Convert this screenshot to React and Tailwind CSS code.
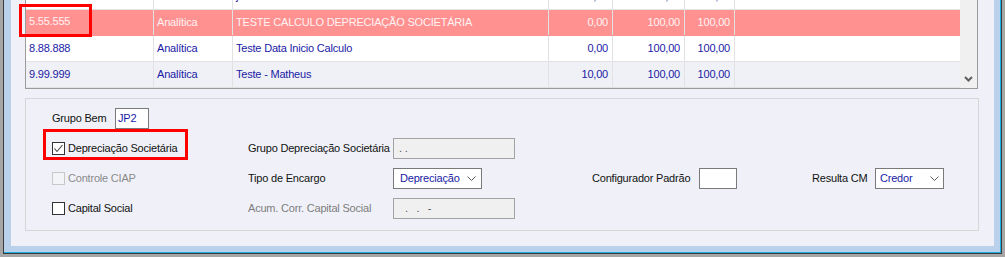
const ROWS = [
  { code: '4.00.404', tipo: 'Analítica', desc: 'jssdasdasdas', a: '10,00', b: '100,00', c: '100,00', bg: 'bg-white' },
  { code: '5.55.555', tipo: 'Analítica', desc: 'TESTE CALCULO DEPRECIAÇÃO SOCIETÁRIA', a: '0,00', b: '100,00', c: '100,00', selected: true },
  { code: '8.88.888', tipo: 'Analítica', desc: 'Teste Data Inicio Calculo', a: '0,00', b: '100,00', c: '100,00', bg: 'bg-white' },
  { code: '9.99.999', tipo: 'Analítica', desc: 'Teste - Matheus', a: '10,00', b: '100,00', c: '100,00', bg: 'bg-[#f0f1f6]' },
]

function Chevron() {
  return (
    <svg width="9" height="5" viewBox="0 0 9 5" className="shrink-0">
      <polyline points="0.5,0.5 4.5,4.5 8.5,0.5" fill="none" stroke="#5a5a5a" strokeWidth="1" />
    </svg>
  )
}

function Check({ checked, disabled }) {
  return (
    <span
      className={`w-[13px] h-[13px] shrink-0 flex items-center justify-center border ${
        disabled ? 'border-[#c8c8c8] bg-[#f3f4f8]' : 'border-[#333333] bg-white'
      }`}
    >
      {checked && (
        <svg width="11" height="11" viewBox="0 0 11 11">
          <polyline points="1.5,5.5 4,8.5 9.5,2" fill="none" stroke="#444" strokeWidth="1.1" />
        </svg>
      )}
    </span>
  )
}

function GridRow({ row, first }) {
  const text = row.selected ? 'text-[#fff3f3]' : 'text-[#1a1aa6]'
  const bg = row.selected ? 'bg-[#ff9191] border-[#ff9191]' : `${row.bg} border-[#e2e2e2]`
  return (
    <div className={`flex h-[26px] border-b ${bg} ${text}`}>
      <div className="relative w-[128px] border-r border-[#e2e2e2] flex items-center px-[3px]">
        {row.selected ? (
          <>
            <span className="self-start pt-[3px]">{row.code}</span>
            <span className="absolute left-[-7px] top-[-6px] w-[73px] h-[33px] border-[3px] border-[#ff0000]" />
          </>
        ) : (
          <span>{row.code}</span>
        )}
      </div>
      <div className="w-[79px] border-r border-[#e2e2e2] flex items-center px-[3px]">{row.tipo}</div>
      <div className="w-[316px] border-r border-[#e2e2e2] flex items-center px-[3px] whitespace-nowrap">{row.desc}</div>
      <div className="w-[64px] border-r border-[#e2e2e2] flex items-center justify-end pr-[4px]">{row.a}</div>
      <div className="w-[72px] border-r border-[#e2e2e2] flex items-center justify-end pr-[4px]">{row.b}</div>
      <div className="w-[50px] border-r border-[#e2e2e2] flex items-center justify-end pr-[4px]">{row.c}</div>
      <div className="w-[225px]" />
    </div>
  )
}

export default function App() {
  return (
    <div className="w-[1005px] h-[257px] bg-[#a6a6a6] pl-[3px] pr-[3px] pb-[3px] font-['Liberation_Sans',Arial,sans-serif] text-[11px] tracking-[-0.2px] text-[#111]">
      <div className="h-full border-l border-r border-b border-[#3c3c3c]">
        <div className="h-full border-r border-b border-[#1ab0e4] bg-[#b9d1ea] pl-[7px] pr-[6px] pb-[6px]">
          <div className="h-full bg-[#f0f1f8] overflow-hidden">
            {/* Grid */}
            <div className="ml-[14px] mr-[16px] -mt-[16px] flex border-l border-r border-b border-[#9b9b9b]">
              <div className="w-[934px] flex flex-col">
                {ROWS.map((r, i) => (
                  <GridRow key={r.code} row={r} first={i === 0} />
                ))}
              </div>
              <div className="w-[17px] bg-[#f0f0f0] flex flex-col items-center justify-end pb-[6px]">
                <svg width="9" height="6" viewBox="0 0 9 6">
                  <polyline points="1,1 4.5,4.5 8,1" fill="none" stroke="#606060" strokeWidth="2" />
                </svg>
              </div>
            </div>

            {/* Form group */}
            <div className="ml-[14px] mr-[15px] mt-[9px] border border-[#d6d6d6] pl-[26px] pt-[9px] pb-[11px]">
              <div className="grid grid-cols-[196px_145px_199px_107px_113px_63px_69px] grid-rows-[21px_21px_21px_21px] gap-y-[9px] items-center">
                {/* row 1 */}
                <div className="flex items-center h-full">
                  <span className="w-[63px]">Grupo Bem</span>
                  <div className="w-[34px] h-[21px] bg-white border border-[#7a7a7a] flex items-center pl-[2px] text-[#1a1aa6]">JP2</div>
                </div>
                <div className="col-span-6" />

                {/* row 2 */}
                <div className="relative flex items-center gap-[3px]">
                  <Check checked />
                  <span>Depreciação Societária</span>
                  <span className="absolute left-[-9px] top-[-11px] w-[145px] h-[31px] border-[3px] border-[#ff0000]" />
                </div>
                <span>Grupo Depreciação Societária</span>
                <div className="w-[122px] h-[21px] bg-[#f0f0f0] border border-[#a3a3a3] flex items-center pl-[5px] text-[#555]">. .</div>
                <div className="col-span-4" />

                {/* row 3 */}
                <div className="flex items-center gap-[3px]">
                  <Check disabled />
                  <span className="text-[#8a8a8a]">Controle CIAP</span>
                </div>
                <span>Tipo de Encargo</span>
                <div className="w-[89px] h-[21px] bg-white border border-[#7a7a7a] flex items-center justify-between pl-[6px] pr-[5px] text-[#1a1aa6]">
                  <span>Depreciação</span>
                  <Chevron />
                </div>
                <span>Configurador Padrão</span>
                <div className="w-[38px] h-[21px] bg-white border border-[#7a7a7a]" />
                <span>Resulta CM</span>
                <div className="w-[69px] h-[21px] bg-white border border-[#7a7a7a] flex items-center justify-between pl-[4px] pr-[4px] text-[#1a1aa6]">
                  <span>Credor</span>
                  <Chevron />
                </div>

                {/* row 4 */}
                <div className="flex items-center gap-[3px]">
                  <Check />
                  <span>Capital Social</span>
                </div>
                <span className="text-[#7d7d7d]">Acum. Corr. Capital Social</span>
                <div className="w-[122px] h-[21px] bg-[#f0f0f0] border border-[#a3a3a3] flex items-center pl-[11px] text-[#555] whitespace-pre">.   .   -</div>
                <div className="col-span-4" />
              </div>
            </div>
          </div>
        </div>
      </div>
    </div>
  )
}
